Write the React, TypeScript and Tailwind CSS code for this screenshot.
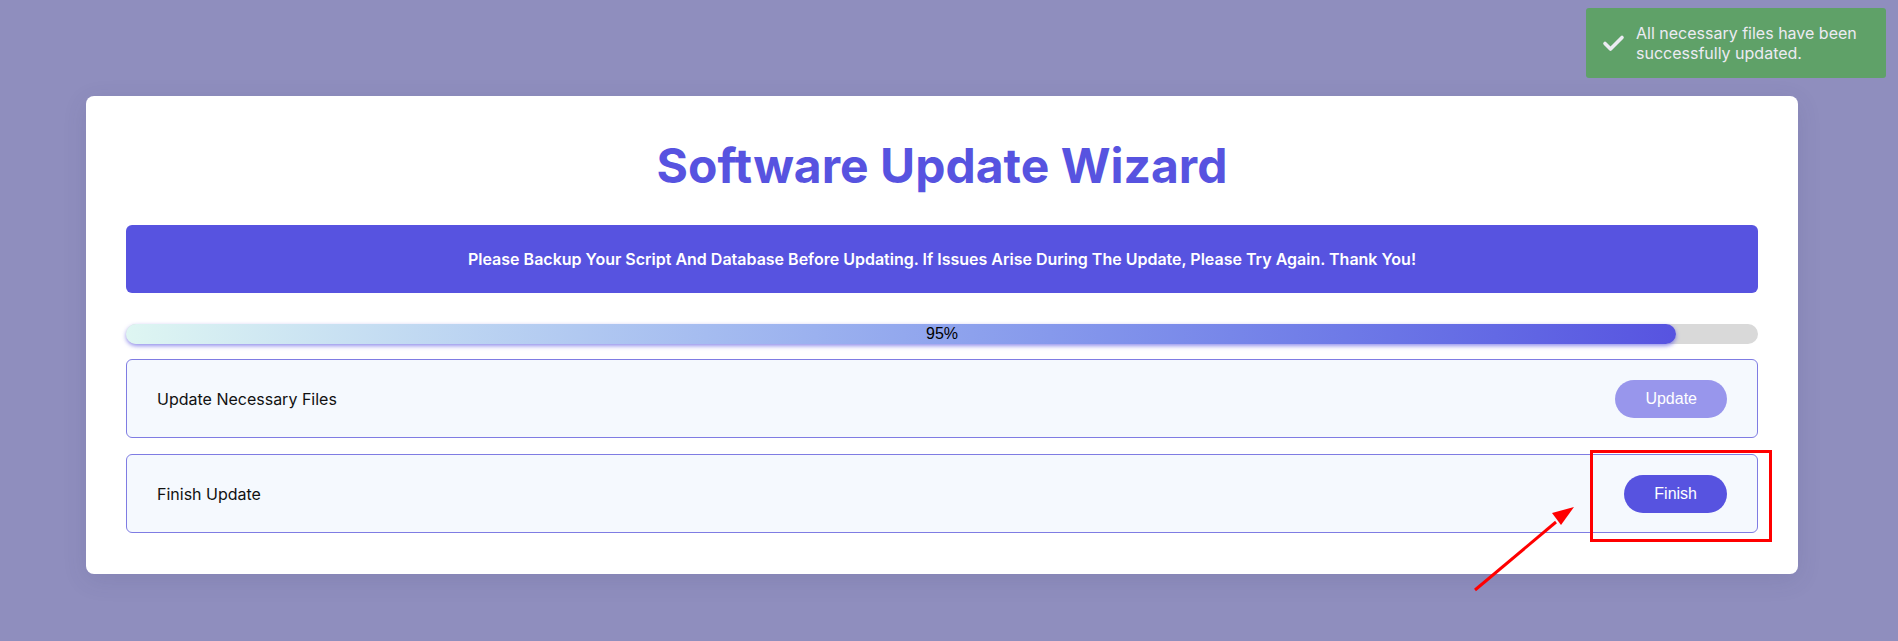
import { useState } from 'react';

// Steps shown under the progress bar
const steps = [
  { id: 'files', label: 'Update Necessary Files', action: 'Update', done: true },
  { id: 'finish', label: 'Finish Update', action: 'Finish', done: false },
];

const App = () => {
  const [progress] = useState(95);

  return (
    <div className="relative min-h-screen bg-[#8f8ebe] pt-[96px] pl-[86px] font-['Inter',sans-serif]">
      {/* Toast */}
      <div className="absolute right-[12px] top-[8px] flex w-[300px] items-center rounded-[3px] bg-[#5fa168] py-[15px] pl-[16px] pr-[12px] text-[#ecebf3]">
        <svg width="23" height="18" viewBox="0 0 23 18" className="mr-[11px] shrink-0">
          <path d="M3 9.5 L8.5 15 L20 3.5" fill="none" stroke="#ecebf3" strokeWidth="3.6" strokeLinecap="round" strokeLinejoin="round" />
        </svg>
        <p className="text-[16px] leading-[20px]">All necessary files have been successfully updated.</p>
      </div>

      {/* Wizard card */}
      <div className="w-[1712px] rounded-[8px] bg-white px-[40px] pt-[46px] pb-[41px] shadow-[0_6px_24px_rgba(60,60,110,0.12)]">
        <h1 className="text-center text-[48px] font-bold leading-[48px] text-[#5753e0]">Software Update Wizard</h1>

        <div className="mt-[35px] flex h-[68px] items-center justify-center rounded-[6px] bg-[#5753e0] text-[16px] font-semibold text-white">
          Please Backup Your Script And Database Before Updating. If Issues Arise During The Update, Please Try Again. Thank You!
        </div>

        {/* Progress */}
        <div className="relative mt-[31px] h-[20px] rounded-full bg-[#d9d9d9]">
          <div
            className="h-full rounded-full bg-gradient-to-r from-[#def6f2] to-[#5753e0] shadow-[0_2px_4px_rgba(87,83,224,0.65)]"
            style={{ width: `${progress}%` }}
          />
          <span className="absolute inset-0 flex items-center justify-center font-['Liberation_Sans',sans-serif] text-[16px] text-black">
            {progress}%
          </span>
        </div>

        <div className="mt-[15px] flex flex-col gap-[16px]">
          {steps.map((s) => (
            <div
              key={s.id}
              className="flex h-[79px] items-center justify-between rounded-[6px] border border-[#7f7ce3] bg-[#f5f9fe] px-[30px]"
            >
              <span className="text-[16px] text-[#111]">{s.label}</span>
              <button
                className={`h-[38px] rounded-full px-[30px] font-['Liberation_Sans',sans-serif] text-[16px] text-white ${
                  s.done ? 'bg-[#9896ec]' : 'bg-[#5753e0]'
                }`}
              >
                {s.action}
              </button>
            </div>
          ))}
        </div>
      </div>

      {/* Annotation: red box + arrow */}
      <div className="absolute left-[1590px] top-[450px] h-[92px] w-[182px] border-[3px] border-[#ff0000]" />
      <svg className="absolute left-0 top-0" width="1898" height="641" style={{ pointerEvents: 'none' }}>
        <line x1="1475" y1="590" x2="1556" y2="522" stroke="#ff0000" strokeWidth="3" />
        <polygon points="1574,507 1552,513 1561,525" fill="#ff0000" />
      </svg>
    </div>
  );
};

export default App;
